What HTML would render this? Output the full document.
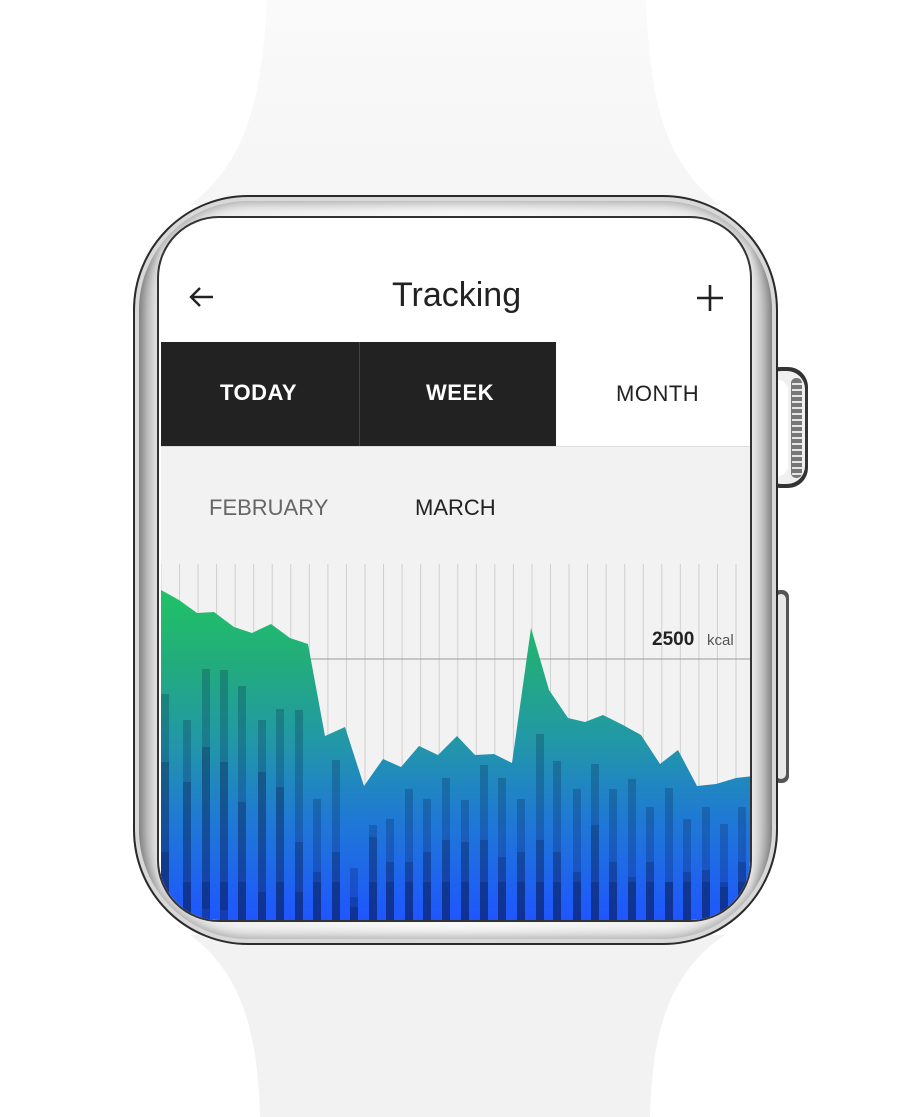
<!DOCTYPE html>
<html><head><meta charset="utf-8"><style>
html,body{margin:0;padding:0;background:#fff;width:915px;height:1117px;overflow:hidden;position:relative;font-family:"Liberation Sans","DejaVu Sans",sans-serif}
.abs{position:absolute}
.case{left:133px;top:195px;width:645px;height:750px;border-radius:115px;box-sizing:border-box;
 background:linear-gradient(90deg,#9a9a9a 0%,#eee 4%,#fafafa 50%,#eee 96%,#9a9a9a 100%);
 border:2px solid #2a2a2a;box-shadow:inset 0 0 0 4px #d8d8d8, inset 0 0 12px 6px rgba(0,0,0,.35)}
.screen{left:157px;top:216px;width:595px;height:706px;border-radius:62px;overflow:hidden;background:#fff;border:2px solid #333;box-sizing:border-box}
.t{position:absolute;white-space:nowrap;font-size:22px;letter-spacing:0.5px}
</style></head><body>
<svg class="abs" style="left:0;top:0" width="915" height="1117">
 <defs>
  <linearGradient id="bd" x1="0" x2="0" y1="0" y2="1"><stop offset="0" stop-color="#fafafa"/><stop offset="1" stop-color="#f5f5f6"/></linearGradient>
 </defs>
 <path d="M267 0 L646 0 C650 90 660 160 720 205 L190 205 C250 160 262 90 267 0 Z" fill="url(#bd)"/>
 <path d="M190 935 L725 935 C665 975 652 1040 650 1117 L260 1117 C258 1040 245 975 190 935 Z" fill="#f2f2f3"/>
 <rect x="760" y="367" width="48" height="121" rx="20" fill="#333"/>
 <rect x="763" y="371" width="42" height="113" rx="18" fill="#f0f0f0"/>
 <rect x="766" y="380" width="22" height="96" rx="10" fill="#fff"/>
 <rect x="791" y="378" width="11" height="100" rx="5" fill="#777"/>
 <path d="M792 384h10M792 390h10M792 396h10M792 402h10M792 408h10M792 414h10M792 420h10M792 426h10M792 432h10M792 438h10M792 444h10M792 450h10M792 456h10M792 462h10M792 468h10M792 474h10" stroke="#e5e5e5" stroke-width="2"/>
 <rect x="773" y="590" width="16" height="193" rx="7" fill="#555"/>
 <rect x="776" y="594" width="10" height="185" rx="5" fill="#e8e8e8"/>
</svg>
<div class="abs case"></div>
<div class="abs screen">
 <div class="abs" style="left:-157px;top:-216px;width:915px;height:1117px">
  <svg class="abs" style="left:185px;top:282px" width="30" height="26"><path d="M26 13H4M13 4L4 13L13 22" stroke="#222" stroke-width="2.4" fill="none"/></svg>
  <svg class="abs" style="left:694px;top:282px" width="28" height="28"><path d="M14 1V27M1 14H27" stroke="#222" stroke-width="2.6" fill="none"/></svg>
  <div class="t" style="left:390px;top:274px;font-size:34px;letter-spacing:0;color:#222">Tracking</div>
  <div class="abs" style="left:159px;top:340px;width:198px;height:104px;background:#222"></div>
  <div class="abs" style="left:358px;top:340px;width:196px;height:104px;background:#222"></div>
  <div class="abs" style="left:357px;top:340px;width:1px;height:104px;background:#444"></div>
  <div class="abs" style="left:159px;top:444px;width:600px;height:500px;background:#f2f2f2;border-top:1px solid #ddd"></div>
  <div class="t" style="left:218px;top:378px;color:#fff;font-weight:bold">TODAY</div>
  <div class="t" style="left:424px;top:378px;color:#fff;font-weight:bold">WEEK</div>
  <div class="t" style="left:614px;top:379px;color:#222">MONTH</div>
  <div class="t" style="left:207px;top:493px;color:#666;letter-spacing:0">FEBRUARY</div>
  <div class="t" style="left:413px;top:493px;color:#222;letter-spacing:0">MARCH</div>
  <svg class="abs" style="left:0;top:0" width="915" height="1117">
   <defs>
    <pattern id="gp" patternUnits="userSpaceOnUse" x="177" y="0" width="18.55" height="10"><rect x="0" y="0" width="1" height="10" fill="#cfcfcf"/></pattern>
    <linearGradient id="ar" gradientUnits="userSpaceOnUse" x1="0" y1="588" x2="0" y2="920">
     <stop offset="0" stop-color="#20c266"/><stop offset="0.22" stop-color="#22ac7c"/>
     <stop offset="0.45" stop-color="#2298a6"/><stop offset="0.7" stop-color="#1f78d6"/><stop offset="1" stop-color="#1f55ff"/>
    </linearGradient>
   </defs>
   <rect x="159" y="562" width="600" height="360" fill="url(#gp)"/>
   <line x1="159" y1="657" x2="760" y2="657" stroke="#999" stroke-width="1"/>
   <polygon fill="url(#ar)" points="159,588 177,598 195,611 212,610 232,625 250,631 269,622 288,636 306,642 323,734 343,725 362,784 381,757 399,765 417,744 436,753 455,734 473,753 492,752 510,761 529,626 547,688 566,716 583,720 601,713 621,723 639,733 658,762 676,748 695,784 714,782 734,776 760,773 760,925 159,925"/>
   <g fill="rgba(5,20,60,0.22)">
    <path d="M159 692h8v240h-8zM181 718h8v240h-8zM200 667h8v240h-8zM218 668h8v240h-8zM236 684h8v240h-8zM256 718h8v240h-8zM274 707h8v240h-8zM293 708h8v240h-8zM311 797h8v240h-8zM330 758h8v240h-8zM348 866h8v240h-8zM367 823h8v240h-8zM384 817h8v240h-8zM403 787h8v240h-8zM421 797h8v240h-8zM440 776h8v240h-8zM459 798h8v240h-8zM478 763h8v240h-8zM496 776h8v240h-8zM515 797h8v240h-8zM534 732h8v240h-8zM551 759h8v240h-8zM571 787h8v240h-8zM589 762h8v240h-8zM607 787h8v240h-8zM626 777h8v240h-8zM644 805h8v240h-8zM663 786h8v240h-8zM681 817h8v240h-8zM700 805h8v240h-8zM718 822h8v240h-8zM736 805h8v240h-8z"/>
    <path d="M159 760h8v240h-8zM181 780h8v240h-8zM200 745h8v240h-8zM218 760h8v240h-8zM236 800h8v240h-8zM256 770h8v240h-8zM274 785h8v240h-8zM293 840h8v240h-8zM311 870h8v240h-8zM330 850h8v240h-8zM348 895h8v240h-8zM367 835h8v240h-8zM384 860h8v240h-8zM403 860h8v240h-8zM421 850h8v240h-8zM440 838h8v240h-8zM459 840h8v240h-8zM478 838h8v240h-8zM496 855h8v240h-8zM515 850h8v240h-8zM534 838h8v240h-8zM551 850h8v240h-8zM571 870h8v240h-8zM589 823h8v240h-8zM607 860h8v240h-8zM626 875h8v240h-8zM644 860h8v240h-8zM663 880h8v240h-8zM681 870h8v240h-8zM700 868h8v240h-8zM718 885h8v240h-8zM736 860h8v240h-8z"/>
    <path d="M159 850h8v240h-8zM181 880h8v240h-8zM200 880h8v240h-8zM218 880h8v240h-8zM236 880h8v240h-8zM256 890h8v240h-8zM274 880h8v240h-8zM293 890h8v240h-8zM311 880h8v240h-8zM330 880h8v240h-8zM348 905h8v240h-8zM367 880h8v240h-8zM384 880h8v240h-8zM403 880h8v240h-8zM421 880h8v240h-8zM440 880h8v240h-8zM459 880h8v240h-8zM478 880h8v240h-8zM496 880h8v240h-8zM515 880h8v240h-8zM534 880h8v240h-8zM551 880h8v240h-8zM571 880h8v240h-8zM589 880h8v240h-8zM607 880h8v240h-8zM626 880h8v240h-8zM644 880h8v240h-8zM663 880h8v240h-8zM681 880h8v240h-8zM700 880h8v240h-8zM718 880h8v240h-8zM736 880h8v240h-8z"/>
   </g>
   <text x="650" y="643" font-family="Liberation Sans, sans-serif" font-size="19" font-weight="bold" fill="#222">2500</text>
   <text x="705" y="643" font-family="Liberation Sans, sans-serif" font-size="15" fill="#555">kcal</text>
  </svg>
 </div>
</div>
</body></html>
